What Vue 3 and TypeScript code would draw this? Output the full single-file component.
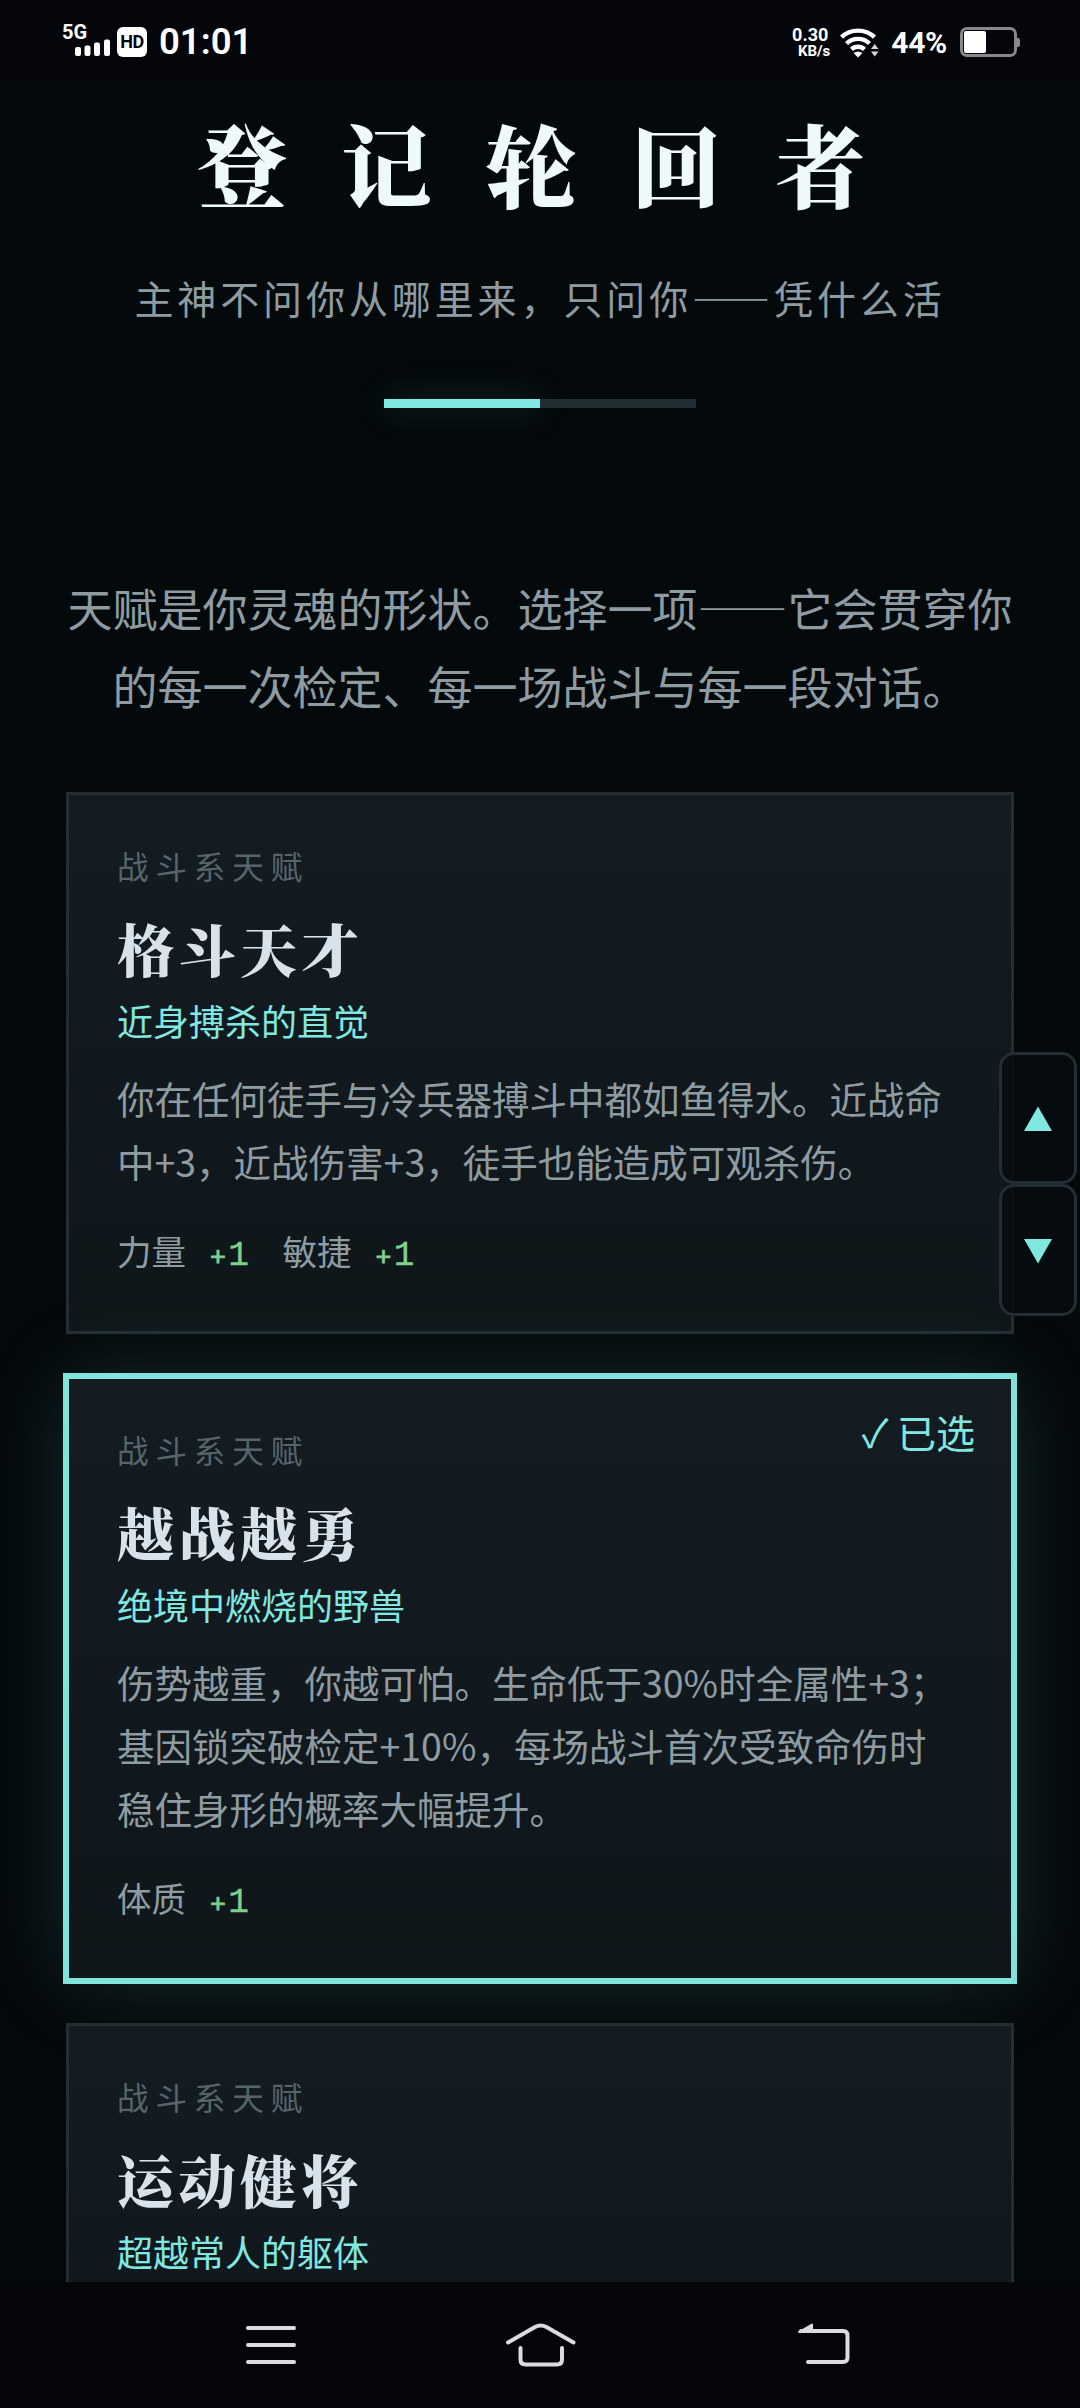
<script setup lang="ts">
interface Stat {
  name: string
  bonus: number
}

interface Talent {
  id: string
  category: string
  name: string
  tagline: string
  lines: string[]
  stats: Stat[]
}

const selectedId = 'rising'

const intro: string[] = ['天赋是你灵魂的形状。选择一项——它会贯穿你', '的每一次检定、每一场战斗与每一段对话。']

const talents: Talent[] = [
  {
    id: 'fighter',
    category: '战斗系天赋',
    name: '格斗天才',
    tagline: '近身搏杀的直觉',
    lines: ['你在任何徒手与冷兵器搏斗中都如鱼得水。近战命', '中+3，近战伤害+3，徒手也能造成可观杀伤。'],
    stats: [
      { name: '力量', bonus: 1 },
      { name: '敏捷', bonus: 1 },
    ],
  },
  {
    id: 'rising',
    category: '战斗系天赋',
    name: '越战越勇',
    tagline: '绝境中燃烧的野兽',
    lines: [
      '伤势越重，你越可怕。生命低于30%时全属性+3；',
      '基因锁突破检定+10%，每场战斗首次受致命伤时',
      '稳住身形的概率大幅提升。',
    ],
    stats: [{ name: '体质', bonus: 1 }],
  },
  {
    id: 'athlete',
    category: '战斗系天赋',
    name: '运动健将',
    tagline: '超越常人的躯体',
    lines: [],
    stats: [],
  },
]
</script>

<template>
  <div class="screen" lang="zh-CN">
    <header class="status">
      <div class="status-left">
        <div class="signal">
          <span class="net">5G</span>
          <svg class="bars" width="36" height="17" viewBox="0 0 36 17" fill="#fff">
            <rect x="0" y="8" width="6" height="9" rx="2" />
            <rect x="9.5" y="6.5" width="6" height="10.5" rx="2" />
            <rect x="19" y="3.5" width="6" height="13.5" rx="2" />
            <rect x="29" y="0.5" width="6" height="16.5" rx="2" />
          </svg>
        </div>
        <span class="hd">HD</span>
        <span class="time">01:01</span>
      </div>
      <div class="status-right">
        <div class="speed"><span class="rate">0.30</span><span class="unit">KB/s</span></div>
        <svg class="wifi" width="40" height="30" viewBox="0 0 40 30">
          <g fill="none" stroke="#fff" stroke-width="4.4">
            <path d="M1.500 9.200a24 24 0 0 1 33 0" />
            <path d="M6.500 15.500a16.500 16.500 0 0 1 23 0" />
            <path d="M11.500 21.300a9.500 9.500 0 0 1 13 0" />
          </g>
          <path d="M13.500 25q4.500-3 9 0L18 29.500z" fill="#fff" />
          <path d="M31 21l3.700-5 3.700 5zM31 23.500h7.400l-3.700 5z" fill="#d8d8da" />
        </svg>
        <span class="percent">44%</span>
        <div class="battery"><i class="cell"><i class="level"></i></i><i class="nub"></i></div>
      </div>
    </header>

    <main class="page">
      <h1 class="title">登记轮回者</h1>
      <p class="subtitle">主神不问你从哪里来，只问你——凭什么活</p>
      <div class="steps"><i class="step on"></i><i class="step"></i></div>
      <p class="intro"><span v-for="line in intro" :key="line">{{ line }}</span></p>

      <section class="cards">
        <article v-for="t in talents" :key="t.id" class="card" :class="{ selected: t.id === selectedId }">
          <span v-if="t.id === selectedId" class="picked">✓ 已选</span>
          <div class="category">{{ t.category }}</div>
          <h2 class="name">{{ t.name }}</h2>
          <div class="tagline">{{ t.tagline }}</div>
          <p class="desc"><span v-for="line in t.lines" :key="line">{{ line }}</span></p>
          <div class="stats">
            <span v-for="s in t.stats" :key="s.name" class="stat">{{ s.name }}<b class="sign">+</b><b>{{ s.bonus }}</b></span>
          </div>
        </article>
      </section>
    </main>

    <aside class="pager">
      <button class="pager-btn" type="button" aria-label="up">
        <svg width="28" height="25" viewBox="0 0 28 25"><path d="M14 0.500L28 25H0z" fill="#80e8e0" /></svg>
      </button>
      <button class="pager-btn down" type="button" aria-label="down">
        <svg width="28" height="25" viewBox="0 0 28 25"><path d="M14 24.500L28 0H0z" fill="#80e8e0" /></svg>
      </button>
    </aside>

    <nav class="navbar">
      <svg width="80" height="60" viewBox="0 0 80 60" class="glyph">
        <path d="M17 13h46M17 30h46M17 47h46" />
      </svg>
      <svg width="80" height="60" viewBox="0 0 80 60" class="glyph home">
        <path d="M8 27.500L35 12q5.700-3.200 11.400 0L73.500 27.500" />
        <path d="M20.500 33v11.500q0 5 5 5h31.500q5 0 5-5V33" />
      </svg>
      <svg width="80" height="60" viewBox="0 0 80 60" class="glyph back">
        <path d="M25 47h35q4.500 0 4.500-4.500v-22q0-4.500-4.500-4.500H18" />
        <path class="solid" d="M16 17L29 9.500v7.500z" />
      </svg>
    </nav>
  </div>
</template>

<style>
body {
  margin: 0;
  background: #04090b;
}
</style>

<style scoped>
.screen {
  position: relative;
  display: flex;
  flex-direction: column;
  width: 1080px;
  height: 2408px;
  overflow: hidden;
  background: #04090b;
  color: #8e9ca2;
  font-family: 'Noto Sans CJK SC', sans-serif;
}
h1,
h2,
p {
  margin: 0;
}
i {
  display: block;
}

.status {
  flex: none;
  box-sizing: border-box;
  height: 80px;
  padding: 0 60px 0 62px;
  display: flex;
  justify-content: space-between;
  background: #04060b;
  color: #fff;
  font-family: Roboto, sans-serif;
}
.status-left,
.status-right {
  display: flex;
  align-items: flex-start;
}
.signal {
  width: 49px;
  padding-top: 23px;
}
.net {
  display: block;
  height: 16px;
  font-size: 20px;
  line-height: 19px;
  font-weight: 700;
}
.bars {
  display: block;
  margin-left: 13px;
}
.hd {
  margin: 27px 0 0 6px;
  width: 30px;
  height: 30px;
  border-radius: 6px;
  background: #fff;
  color: #04060b;
  font-size: 18px;
  line-height: 30px;
  font-weight: 700;
  text-align: center;
  letter-spacing: -0.5px;
}
.time {
  margin: 19px 0 0 12px;
  font-size: 36.5px;
  line-height: 45px;
  font-weight: 600;
}
.speed {
  width: 38px;
  padding-top: 26px;
  display: flex;
  flex-direction: column;
  align-items: flex-end;
  font-weight: 700;
}
.rate {
  margin-right: 2px;
  font-size: 18px;
  line-height: 17px;
}
.unit {
  font-size: 15px;
  line-height: 16px;
}
.wifi {
  margin: 28px 0 0 10px;
}
.percent {
  margin: 25px 0 0 11px;
  font-size: 30px;
  line-height: 35px;
  font-weight: 700;
  letter-spacing: -0.3px;
}
.battery {
  display: flex;
  align-items: center;
  margin: 27px 0 0 13px;
  height: 30px;
}
.cell {
  box-sizing: border-box;
  width: 57px;
  height: 30px;
  padding: 1px;
  border: 3px solid #87888b;
  border-radius: 7px;
}
.level {
  width: 22px;
  height: 22px;
  border-radius: 2px;
  background: #fff;
}
.nub {
  width: 3px;
  height: 9px;
  border-radius: 0 2px 2px 0;
  background: #87888b;
}

.page {
  flex: 1;
  min-height: 0;
  overflow: hidden;
  display: flex;
  flex-direction: column;
  align-items: center;
}
.title {
  margin-top: 22px;
  padding-left: 37px;
  height: 120px;
  line-height: 120px;
  font-family: 'Noto Serif CJK SC', 'Source Han Serif SC', 'Noto Serif SC', 'Noto Sans CJK SC', serif;
  font-size: 90px;
  font-weight: 900;
  letter-spacing: 54.6px;
  color: #eefafa;
  white-space: nowrap;
}
.subtitle {
  margin-top: 46px;
  line-height: 58px;
  font-size: 39px;
  letter-spacing: 0.1em;
  white-space: nowrap;
}
.steps {
  display: flex;
  margin-top: 73px;
}
.step {
  width: 156px;
  height: 9px;
  background: #222d34;
}
.step.on {
  background: #80e8e0;
  box-shadow: 0 0 36px rgba(110, 230, 215, 0.25);
}
.intro {
  margin-top: 161px;
  display: flex;
  flex-direction: column;
  align-items: center;
  font-size: 45px;
  line-height: 78px;
  white-space: nowrap;
}
.cards {
  width: 948px;
  margin-top: 67px;
  display: flex;
  flex-direction: column;
  gap: 42px;
}
.card {
  position: relative;
  box-sizing: border-box;
  padding: 46px 48px 57px;
  border: 3px solid #222d34;
  background: linear-gradient(180deg, #141c22, #0f161a);
}
.card.selected {
  border-color: #80e3dc;
  box-shadow: 0 0 0 3px #80e3dc, 0 0 84px rgba(130, 215, 200, 0.17);
}
.picked {
  position: absolute;
  top: 24px;
  right: 36px;
  font-size: 39px;
  line-height: 56px;
  color: #80e8e0;
}
.category {
  height: 48px;
  line-height: 48px;
  font-size: 31.5px;
  letter-spacing: 0.22em;
  color: #56656c;
}
.name {
  margin-top: 16px;
  height: 84px;
  line-height: 84px;
  font-family: 'Noto Serif CJK SC', 'Source Han Serif SC', 'Noto Serif SC', 'Noto Sans CJK SC', serif;
  font-size: 57px;
  font-weight: 900;
  letter-spacing: 0.08em;
  color: #d8e2ea;
}
.tagline {
  margin-top: 10px;
  height: 42px;
  line-height: 42px;
  font-size: 36px;
  color: #80e8e0;
}
.desc {
  margin-top: 25px;
  display: flex;
  flex-direction: column;
  font-size: 37.5px;
  line-height: 63px;
  white-space: nowrap;
}
.stats {
  display: flex;
  gap: 33.5px;
  margin-top: 34px;
  height: 48px;
  line-height: 48px;
  font-size: 34.5px;
}
.stat {
  display: flex;
  align-items: baseline;
  height: 48px;
}
.stat b {
  font-family: 'Liberation Mono', monospace;
  font-size: 34.5px;
  font-weight: 400;
  color: #7fd08a;
  -webkit-text-stroke: 0.4px #7fd08a;
}
.stat .sign {
  margin: 0 2.3px 0 24px;
  font-size: 26.5px;
  -webkit-text-stroke-width: 0.9px;
}

.pager {
  position: absolute;
  left: 999px;
  top: 1052px;
  display: flex;
  flex-direction: column;
}
.pager-btn {
  box-sizing: border-box;
  width: 78px;
  height: 132px;
  padding: 0;
  border: 3px solid #222d34;
  border-radius: 15px;
  background: rgba(6, 12, 15, 0.85);
  display: flex;
  align-items: center;
  justify-content: center;
}
.pager-btn.down {
  padding-top: 2px;
}

.navbar {
  flex: none;
  box-sizing: border-box;
  height: 126px;
  padding: 33px 0 0 231px;
  display: flex;
  background: #04060b;
}
.glyph {
  fill: none;
  stroke: #dcdcde;
  stroke-width: 4;
  stroke-linecap: round;
  stroke-linejoin: round;
}
.home {
  margin-left: 189px;
}
.back {
  margin-left: 203px;
}
.glyph .solid {
  fill: #dcdcde;
  stroke-width: 2;
}
</style>
